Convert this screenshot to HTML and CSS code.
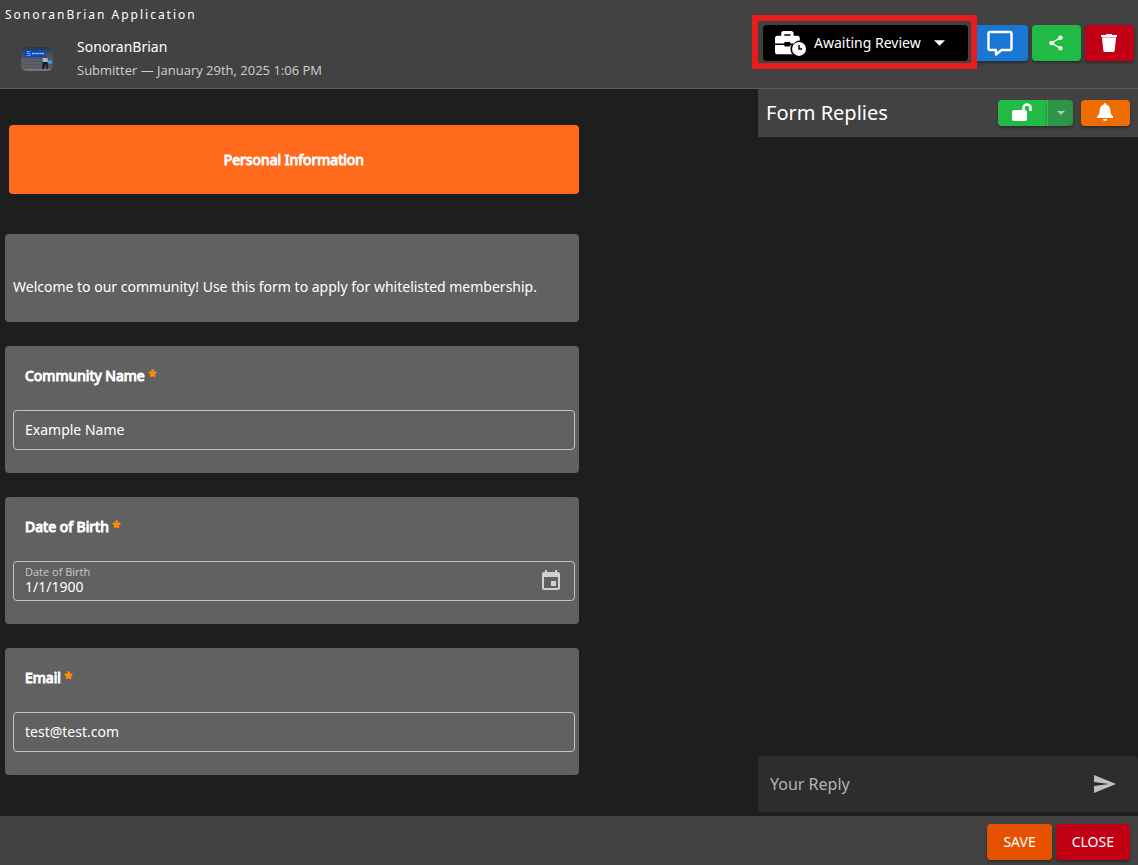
FILE: index.html
```html
<!DOCTYPE html>
<html lang="en">
<head>
<meta charset="utf-8">
<title>SonoranBrian Application</title>
<link rel="stylesheet" href="styles.css">
</head>
<body>
<div class="app">
  <header class="top">
    <div class="top-info">
      <h1 class="app-title">SonoranBrian Application</h1>
      <div class="submitter">
        <svg class="avatar" viewBox="0 0 32 24" role="img" aria-label="SonoranBrian avatar">
          <defs>
            <clipPath id="avatar-clip"><rect width="32" height="24" rx="6"/></clipPath>
            <linearGradient id="avatar-bg" x1="0" y1="0" x2="0" y2="1">
              <stop offset="0" stop-color="#26384e"/><stop offset=".4" stop-color="#485463"/><stop offset="1" stop-color="#565960"/>
            </linearGradient>
          </defs>
          <g clip-path="url(#avatar-clip)">
            <rect width="32" height="24" fill="url(#avatar-bg)"/>
            <path d="M4 3h20v7H4z" fill="#0b46b4"/>
            <path d="M9.500 4.500H6.500v2H9v2H5.500" fill="none" stroke="#4ba3ff" stroke-width="1.200"/>
            <path d="M11 6.500h12" stroke="#9cc8f5" stroke-width="1.600" stroke-dasharray="2 .5"/>
            <path d="M0 13h22M2 16h18M0 19h20" stroke="#696b70" stroke-width="1"/>
            <path d="M0 21.500h32V24H0z" fill="#75746f"/>
            <circle cx="24" cy="9.500" r="1.300" fill="#53423c"/>
            <path d="M21.500 11h5l.5 4h-5z" fill="#a9b8c6"/>
            <path d="M22 15h4.500l.5 7h-1.500l-1-5-1.500 5h-2z" fill="#141b27"/>
            <circle cx="29" cy="15" r="2" fill="#3ba0ee"/>
          </g>
        </svg>
        <div class="submitter-text">
          <div class="submitter-name">SonoranBrian</div>
          <div class="submitter-meta">Submitter — January 29th, 2025 1:06 PM</div>
        </div>
      </div>
    </div>
    <div class="actions">
      <div class="status">
        <svg class="status-icon" viewBox="0 0 640 512" aria-hidden="true">
          <path fill="#fff" d="M0 240V144c0-26 22-48 48-48h80V48c0-26 22-48 48-48h160c26 0 48 22 48 48v48h80c26 0 48 22 48 48v49c-50 0-94 20-122 63H320v-16c0-9-7-16-16-16h-96c-9 0-16 7-16 16v16H0zM192 96h128V64H192v32zM0 288h192v16c0 9 7 16 16 16h96c9 0 16-7 16-16v-16h22c-12 24-22 48-22 80 0 44 16 82 42 112H48c-26 0-48-22-48-48V288z"/>
          <circle cx="496" cy="368" r="144" fill="#fff"/>
          <path d="M496 288v80h62" fill="none" stroke="#000" stroke-width="30"/>
        </svg>
        <select class="status-select" aria-label="Application status">
          <option>Awaiting Review</option>
        </select>
        <svg class="status-caret" viewBox="0 0 12 6" aria-hidden="true"><path fill="#fff" d="M0 0h12L6 6z"/></svg>
        <span class="status-frame"></span>
      </div>
      <button class="btn btn-blue" type="button" aria-label="Comment">
        <svg width="26" height="26" viewBox="0 0 26 26" aria-hidden="true"><path d="M3 2h20q1.500 0 1.500 1.500v15Q24.500 20 23 20h-8.500L9 24.500V20H3q-1.500 0-1.500-1.500v-15Q1.500 2 3 2z" fill="none" stroke="#fff" stroke-width="2.400" stroke-linejoin="round"/></svg>
      </button>
      <button class="btn btn-green" type="button" aria-label="Share">
        <svg width="18" height="18" viewBox="0 0 24 24" aria-hidden="true"><path fill="#fff" d="M18 16.080c-.76 0-1.440.3-1.960.77L8.910 12.700c.05-.23.09-.46.09-.7s-.04-.47-.09-.7l7.050-4.110c.54.5 1.250.81 2.040.81 1.660 0 3-1.340 3-3s-1.340-3-3-3-3 1.340-3 3c0 .24.04.47.09.7L8.040 9.810C7.500 9.310 6.790 9 6 9c-1.660 0-3 1.340-3 3s1.340 3 3 3c.79 0 1.500-.31 2.040-.81l7.120 4.160c-.05.21-.08.43-.08.65 0 1.610 1.310 2.920 2.920 2.920s2.920-1.310 2.920-2.920-1.310-2.920-2.920-2.920z"/></svg>
      </button>
      <button class="btn btn-red" type="button" aria-label="Delete">
        <svg width="18" height="18" viewBox="0 0 18 18" aria-hidden="true"><path fill="#fff" d="M1 1h4.500l1-1h5l1 1H17v2H1zM2 4h14l-1.300 12.500Q14.500 18 13 18H5q-1.500 0-1.700-1.500z"/><path d="M2 3.500h14" stroke="#eba6ae"/></svg>
      </button>
    </div>
  </header>

  <main class="content">
    <form class="form-area" id="application">
      <div class="form">
        <h2 class="banner">Personal Information</h2>
        <section class="card intro"><p>Welcome to our community! Use this form to apply for whitelisted membership.</p></section>
        <section class="card">
          <label class="field-label" for="name">Community Name <span class="req">*</span></label>
          <div class="field"><input id="name" type="text" value="Example Name"></div>
        </section>
        <section class="card">
          <label class="field-label" for="dob">Date of Birth <span class="req">*</span></label>
          <div class="field">
            <div class="stacked">
              <label class="float-label" for="dob">Date of Birth</label>
              <input id="dob" type="text" value="1/1/1900">
            </div>
            <button class="icon-btn" type="button" aria-label="Pick a date">
              <svg width="24" height="24" viewBox="0 0 24 24" aria-hidden="true"><path fill="#d0d0d0" d="M19 3h-1V1h-2v2H8V1H6v2H5c-1.110 0-2 .9-2 2v14c0 1.100.89 2 2 2h14c1.100 0 2-.9 2-2V5c0-1.100-.9-2-2-2zm0 16H5V8h14v11zM12 12h5v5h-5z"/></svg>
            </button>
          </div>
        </section>
        <section class="card">
          <label class="field-label" for="email">Email <span class="req">*</span></label>
          <div class="field"><input id="email" type="text" value="test@test.com"></div>
        </section>
      </div>
    </form>

    <aside class="replies">
      <div class="replies-head">
        <h2 class="replies-title">Form Replies</h2>
        <div class="split">
          <button class="small-btn btn-green lock" type="button" aria-label="Unlock replies">
            <svg width="20" height="18" viewBox="0 0 20 18" aria-hidden="true"><rect y="7" width="15" height="11" rx="2" fill="#fff"/><path d="M11.500 9V5a3.500 3.500 0 0 1 7 0v3" fill="none" stroke="#fff" stroke-width="2.600"/></svg>
          </button>
          <button class="small-btn lock-more" type="button" aria-label="More lock options">
            <svg width="8" height="4" viewBox="0 0 8 4" aria-hidden="true"><path fill="#b9c6bc" d="M0 0h8L4 4z"/></svg>
          </button>
        </div>
        <button class="small-btn btn-amber" type="button" aria-label="Notifications">
          <svg width="16" height="18" viewBox="0 0 16 18" aria-hidden="true"><path fill="#fff" d="M8 0q1.200 0 1.200 1.500Q13 2.500 13.300 7c.2 3.500.7 4.800 2.700 6.500V15H0v-1.500C2 11.800 2.500 10.500 2.700 7 3 2.500 6.800 1.500 6.800 1.500Q6.800 0 8 0zM5.800 16h4.400Q9.800 18 8 18t-2.200-2z"/></svg>
        </button>
      </div>
      <div class="thread"></div>
      <div class="composer">
        <input type="text" placeholder="Your Reply" aria-label="Your Reply">
        <button class="icon-btn" type="button" aria-label="Send">
          <svg width="24" height="24" viewBox="0 0 24 24" aria-hidden="true"><path fill="#c0c0c0" d="M1 21l22-9L1 3v7l15 2-15 2z"/></svg>
        </button>
      </div>
    </aside>
  </main>

  <footer class="bottom">
    <button class="btn btn-orange" type="submit" form="application">SAVE</button>
    <button class="btn btn-red" type="button">CLOSE</button>
  </footer>
</div>
</body>
</html>
```
FILE: styles.css
```css
* { box-sizing: border-box; }

body {
  margin: 0;
  background: #1e1e1e;
  color: #fff;
  font: 14px/20px "Noto Sans", "Open Sans", sans-serif;
}

h1, h2, p { margin: 0; font-weight: 400; }

button, input, select { font: inherit; color: inherit; }

button { border: 0; cursor: pointer; }

svg { display: block; flex: none; }

.app {
  min-height: 100vh;
  display: flex;
  flex-direction: column;
}

.top {
  display: flex;
  justify-content: space-between;
  background: #424242;
  border-bottom: 1px solid #5c5c5c;
  padding: 5px 4px 7px 5px;
}

.app-title {
  font-size: 12px;
  letter-spacing: 2px;
}

.submitter {
  display: flex;
  align-items: center;
  gap: 24px;
  padding: 12px 0 0 16px;
}

.avatar { width: 32px; height: 24px; }

.submitter-name { line-height: 24px; margin-top: -2px; }

.submitter-meta {
  font-family: "Open Sans", "Noto Sans", sans-serif;
  font-size: 13px;
  line-height: 22px;
  color: #d0d0d0;
}

.actions {
  display: flex;
  align-items: flex-start;
  gap: 4px;
  padding-top: 20px;
}

.status {
  position: relative;
  display: flex;
  align-items: center;
  height: 36px;
  padding: 0 23px 0 12px;
  border-radius: 4px;
  background: #000;
}

.status-icon { width: 31px; height: 25px; }

.status-select {
  appearance: none;
  border: 0;
  margin: 0 13px 0 8px;
  padding: 0;
  background: #000;
}

.status-caret { width: 11px; height: 6px; }

.status-frame {
  position: absolute;
  inset: -10px -9px -8px -11px;
  border: 6px solid #e81c1c;
  pointer-events: none;
  z-index: 1;
}

.btn, .small-btn {
  display: flex;
  align-items: center;
  justify-content: center;
  border-radius: 4px;
  box-shadow: 0 2px 3px rgba(0, 0, 0, .35);
}

.btn { height: 36px; padding: 0 16px; }

.small-btn { height: 26px; padding: 0; width: 49px; }

.btn-amber, .lock { padding: 0 1px 2px 0; }

.actions .btn { width: 49px; padding: 0 1px 0 0; }

.actions .btn-blue { width: 56px; padding: 0; }

.btn-blue { background: #1976d2; }
.btn-green { background: #21ba45; }
.btn-red { background: #c10015; }
.btn-orange { background: #e65100; }
.btn-amber { background: #ef6c00; }

.content {
  flex: 1;
  display: grid;
  grid-template-columns: minmax(0, 1fr) 380px;
}

.form-area {
  display: grid;
  grid-template-columns: 16fr 5fr;
  align-items: start;
  padding: 36px 0 36px 5px;
}

.form { display: grid; gap: 24px; }

.banner {
  margin: 0 0 16px 4px;
  padding: 24px;
  border-radius: 4px;
  background: #ff6a1d;
  font-size: 14px;
  line-height: 21px;
  text-align: center;
}

.banner, .field-label { -webkit-text-stroke: 1px currentColor; }

.card {
  border-radius: 4px;
  background: #616161;
  padding: 20px 4px 23px 8px;
}

.intro { padding: 43px 8px 25px; }

.field-label {
  display: block;
  margin-bottom: 24px;
  padding-left: 12px;
}

.req { color: #ff9100; }

.field {
  display: flex;
  align-items: center;
  height: 40px;
  padding: 0 11px 0 11px;
  border: 1px solid #c4c4c4;
  border-radius: 4px;
}

.field input {
  display: block;
  width: 100%;
  min-width: 0;
  padding: 0;
  border: 0;
  outline: 0;
  background: none;
}

.stacked { flex: 1; padding-bottom: 2px; }

.stacked input { height: 16px; line-height: 16px; }

.float-label {
  display: block;
  font-family: "Open Sans", "Noto Sans", sans-serif;
  font-size: 11px;
  line-height: 14px;
  color: #c8c8c8;
}

.icon-btn { padding: 0; background: none; }

.replies { display: flex; flex-direction: column; }

.replies-head {
  display: flex;
  align-items: center;
  gap: 8px;
  height: 48px;
  padding: 0 8px;
  background: #424242;
}

.replies-title { flex: 1; font-size: 20px; line-height: 28px; }

.split { display: flex; }

.lock { border-radius: 4px 0 0 4px; }

.lock-more {
  width: 26px;
  border-left: 1px solid #57a869;
  border-radius: 0 4px 4px 0;
  background: #2d9646;
}

.thread { flex: 1; }

.composer {
  display: flex;
  align-items: center;
  height: 56px;
  margin-bottom: 4px;
  padding: 0 21px 0 12px;
  border-radius: 4px 4px 0 0;
  background: #2d2d2d;
}

.composer input {
  flex: 1;
  min-width: 0;
  padding: 0;
  border: 0;
  outline: 0;
  background: none;
  font-size: 16px;
}

.composer input::placeholder { color: #b4b4b4; opacity: 1; }

.bottom {
  display: flex;
  justify-content: flex-end;
  gap: 4px;
  padding: 8px 8px 5px;
  background: #424242;
}
```
